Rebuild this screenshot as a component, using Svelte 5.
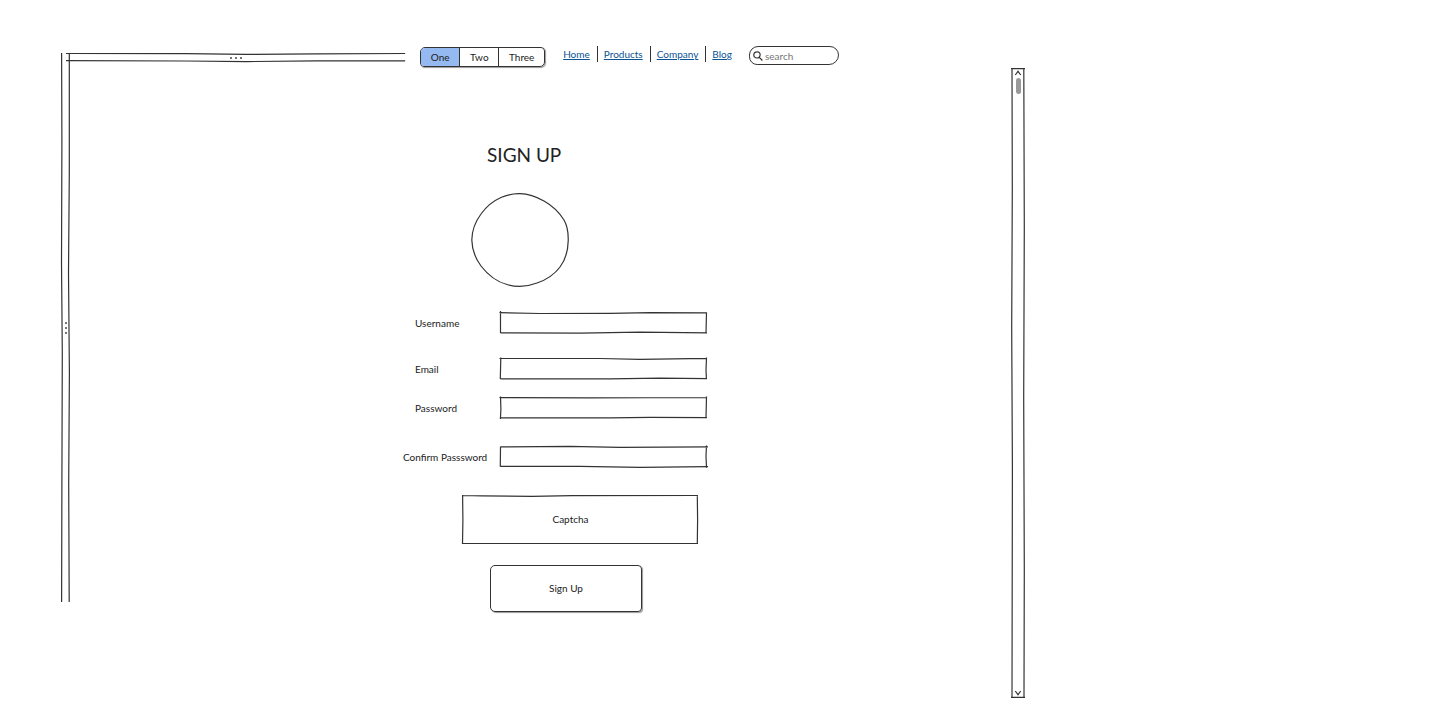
<script lang="ts">
  const segments = ['One', 'Two', 'Three'];
  const links = ['Home', 'Products', 'Company', 'Blog'];
  const fields = [
    { id: 'username', label: 'Username', type: 'text', path: 'M.5 -1V21M-.5 .7L40 1.5L110 1.4L150 .6L207 .8M206.5 .5L206 21M.5 20.8L80 21.2L140 20.2L207 20.8' },
    { id: 'email', label: 'Email', type: 'email', path: 'M.8 -.5L.3 21M-.5 .5L100 .5L140 1.4L207 .4M206.5 -.5L206 12L206.4 21M.5 20.8L110 20.9L160 20.2L207 20.6' },
    { id: 'password', label: 'Password', type: 'password', path: 'M.5 -.5L.9 12L.4 22M-.5 .6L90 .8L207 .5M206.5 -.5L206 20.8M.5 20.8L110 20.8L150 20.3L207 20.7' },
    { id: 'confirm', label: 'Confirm Passsword', type: 'password', path: 'M.5 .5L.3 20.8M.5 .9L70 .3L120 1.3L208 .8M206.5 -.5L206 10L206.5 22M.5 20.4L80 20.3L140 21.3L208 20.6' }
  ];
  let active = $state('One');
</script>

{#snippet sketch(width: number, height: number, path: string)}
  <svg class="outline" viewBox="0 0 {width} {height}" preserveAspectRatio="none" aria-hidden="true">
    <path d={path} />
  </svg>
{/snippet}

<div class="page">
  <div class="rail">
    {@render sketch(9, 549, 'M.6 0L.9 90L.5 210L1.3 300L.9 430L.6 549M8.3 0L8.3 120L7.5 220L8.4 320L7.7 430L8.2 549')}
    <span class="grip vertical"><i></i><i></i><i></i></span>
  </div>

  <div class="content">
    <header>
      <div class="divider">
        {@render sketch(339, 9, 'M0 .5L120 .6L180 1.4L250 .8L339 .5M0 7.6L120 8L180 8.6L250 7.8L339 7.8')}
        <span class="grip"><i></i><i></i><i></i></span>
      </div>
      <div class="segments">
        {#each segments as name}
          <button type="button" class:active={active === name} onclick={() => (active = name)}>{name}</button>
        {/each}
      </div>
      <nav>
        {#each links as name}
          <a href="#{name.toLowerCase()}">{name}</a>
        {/each}
      </nav>
      <label class="search">
        <svg viewBox="0 0 10 10" aria-hidden="true"><path d="M4 .8C6 .6 7.3 2 7.1 4C7 6 5.7 7.1 4 7C2 7 .8 5.7 .8 3.9C.8 2.1 2 .9 4 .8M6.3 6.3L9.4 9.5" /></svg>
        <input type="search" placeholder="search" aria-label="search" />
      </label>
    </header>

    <main>
      <form onsubmit={(e) => e.preventDefault()}>
        <h1>SIGN UP</h1>
        <svg class="avatar" viewBox="0 0 98 94" aria-hidden="true">
          <path d="M49 .6C58 .8 66 4 73 8C81 12.500 88 19 93 27C97 34 97.500 40 97.200 48C97 58 95 66 89 74C83 82 75 87 66 90C57 93.500 46 94.500 36 91.500C26 89 17 82 10 73C4 65 1 56 .8 47C1 37 4 29 10 21C15 14 22 8 30 4.500C36 1.800 42 .5 49 .6Z" />
        </svg>

        {#each fields as field}
          <div class="row {field.id}">
            <label for={field.id}>{field.label}</label>
            <div class="box">
              {@render sketch(207, 21, field.path)}
              <input id={field.id} type={field.type} />
            </div>
          </div>
        {/each}

        <div class="captcha">
          {@render sketch(236, 49, 'M.5 .5L20 .8L70 1.300L110 .6L236 .5M.6 0L.9 25L.5 49M0 48.500H236M235.300 0L235.600 25L235.300 49')}
          Captcha
        </div>
        <button class="submit" type="submit">Sign Up</button>
      </form>
    </main>
  </div>

  <div class="scrollbar">
    {@render sketch(14, 630, 'M0 .6H14M1 0L1.300 120L.7 260L1.400 400L1 630M12.800 0L13.300 160L12.700 330L13.300 500L13 630M0 629.400H14')}
    <svg class="arrow" viewBox="0 0 8 6" aria-hidden="true"><path d="M1.300 5L4 1.300L6.700 5" /></svg>
    <span class="thumb"></span>
    <svg class="arrow down" viewBox="0 0 8 6" aria-hidden="true"><path d="M1.300 1L4 4.700L6.700 1" /></svg>
  </div>
  <div class="margin"></div>
</div>

<style>
  :global(body) {
    background: #fff;
  }

  .page {
    display: flex;
    align-items: flex-start;
    padding: 44px 0 16px 61px;
    color: #222;
    font: 10px/16px Lato, sans-serif;
  }

  button,
  input {
    margin: 0;
    padding: 0;
    border: 0;
    background: none;
    color: inherit;
    font: inherit;
  }

  svg {
    fill: none;
    stroke: #333;
    stroke-width: 1.2;
  }

  .outline {
    position: absolute;
    inset: 0;
    width: 100%;
    height: 100%;
    overflow: visible;
    pointer-events: none;
  }

  .outline path {
    vector-effect: non-scaling-stroke;
  }

  .rail {
    position: relative;
    display: grid;
    place-items: center;
    width: 9px;
    height: 549px;
    margin: 9px -4px 0 0;
  }

  .grip {
    display: flex;
    gap: 3px;
  }

  .grip.vertical {
    flex-direction: column;
  }

  .grip i {
    width: 2px;
    height: 2px;
    border-radius: 1px;
    background: #444;
  }

  .content {
    flex: 945 1 0;
  }

  header {
    display: flex;
    align-items: flex-start;
  }

  header::after {
    content: '';
    flex: 172 1 0;
  }

  .divider {
    position: relative;
    display: grid;
    place-items: center;
    flex: 339 1 0;
    height: 9px;
    margin: 9px 15px 0 0;
  }

  .segments {
    display: flex;
    box-sizing: border-box;
    width: 125px;
    height: 20px;
    margin: 3px 18px 0 0;
    border: 1px solid #333;
    border-radius: 5px 4px 5px 4px;
    box-shadow: 1px 1px 1px #999;
    overflow: hidden;
  }

  .segments button {
    flex: auto;
    padding: 0 8px 1px;
  }

  .segments button + button {
    border-left: 1px solid #333;
  }

  .segments .active {
    background: #95b9f1;
  }

  nav {
    display: flex;
    margin-top: 2px;
  }

  nav a {
    padding: 0 7px 0 6px;
    color: #0b5394;
  }

  nav a:first-child {
    padding-left: 0;
  }

  nav a:last-child {
    padding-right: 0;
  }

  nav a + a {
    border-left: 1px solid #333;
  }

  .search {
    display: flex;
    align-items: center;
    gap: 2px;
    box-sizing: border-box;
    width: 90px;
    height: 19px;
    margin: 2px 0 0 17px;
    padding: 0 8px 0 3px;
    border: 1px solid #333;
    border-radius: 10px 10px 11px 9px;
  }

  .search svg {
    flex: none;
    width: 10px;
    height: 10px;
  }

  .search input {
    min-width: 0;
    width: 100%;
    appearance: none;
    outline: none;
  }

  .search input::placeholder {
    color: #777;
    opacity: 1;
  }

  main {
    display: grid;
    grid-template-columns: minmax(0, 337fr) 304px minmax(0, 304fr);
    margin-top: 76px;
  }

  form {
    grid-column: 2;
  }

  h1 {
    margin: 0 0 26px 84px;
    font-size: 19px;
    font-weight: 400;
    line-height: 24px;
  }

  .avatar {
    display: block;
    width: 98px;
    height: 94px;
    margin: 0 0 25px 68px;
  }

  .row {
    display: flex;
    align-items: center;
    height: 21px;
    margin-bottom: 25px;
  }

  .row label {
    box-sizing: border-box;
    width: 97px;
    padding-left: 12px;
    white-space: nowrap;
  }

  .email {
    margin-bottom: 18px;
  }

  .password,
  .confirm {
    margin-bottom: 28px;
  }

  .confirm label {
    padding-left: 0;
  }

  .box {
    position: relative;
    flex: 1;
  }

  .box input {
    display: block;
    box-sizing: border-box;
    width: 100%;
    height: 21px;
    padding: 0 4px;
    outline: none;
  }

  .captcha {
    position: relative;
    display: grid;
    place-items: center;
    height: 49px;
    margin: 0 9px 21px 59px;
    padding-right: 19px;
    padding-bottom: 2px;
    box-sizing: border-box;
  }

  .submit {
    display: block;
    width: 152px;
    height: 47px;
    margin-left: 87px;
    padding-bottom: 2px;
    border: 1px solid #333;
    border-radius: 5px 4px 4px 5px;
    box-shadow: 1px 1px 1px #999;
  }

  .scrollbar {
    position: relative;
    display: flex;
    flex-direction: column;
    align-items: center;
    gap: 2px;
    box-sizing: border-box;
    width: 14px;
    height: 630px;
    margin-top: 24px;
    padding: 2px 0;
  }

  .arrow {
    width: 8px;
    height: 6px;
  }

  .arrow.down {
    margin-top: auto;
  }

  .thumb {
    width: 5px;
    height: 16px;
    border-radius: 3px;
    background: #999;
  }

  .margin {
    flex: 406 1 0;
  }
</style>
